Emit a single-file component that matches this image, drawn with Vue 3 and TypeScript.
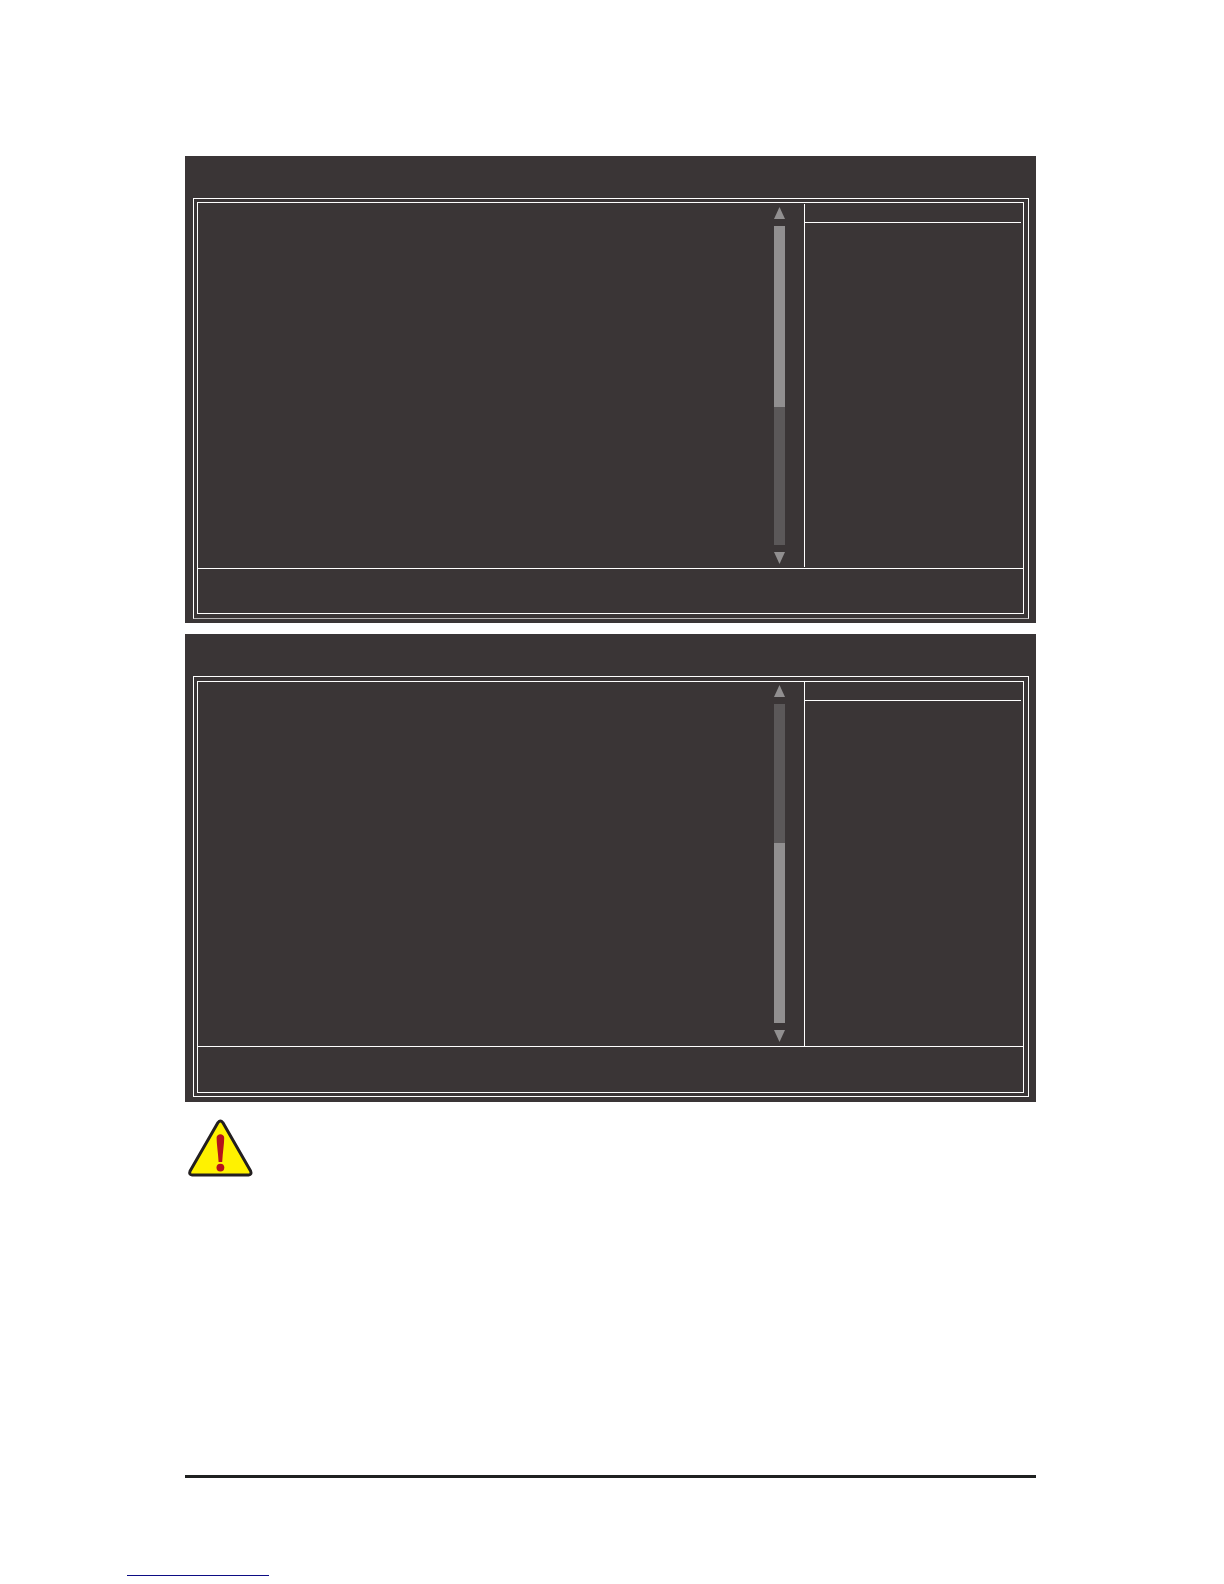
<script setup lang="ts">
interface Screen {
  id: string
  variant: 'upper' | 'lower'
  thumbStart: number
  thumbSize: number
}

// Thumb position and size are percentages of the scroll track.
const screens: Screen[] = [
  { id: 'first', variant: 'upper', thumbStart: 0, thumbSize: 56.74 },
  { id: 'second', variant: 'lower', thumbStart: 43.57, thumbSize: 56.43 },
]
</script>

<template>
  <div class="page">
    <main class="content">
      <section v-for="s in screens" :key="s.id" class="screen" :class="s.variant">
        <header class="title-bar"></header>
        <div class="frame">
          <div class="frame-inner">
            <div class="body">
              <div class="options"></div>
              <div class="scroll">
                <button class="arrow" type="button" aria-label="Scroll up">
                  <svg viewBox="0 0 11 12" width="11" height="12"><path d="M5.5 0L11 12H0Z" /></svg>
                </button>
                <div class="track">
                  <div class="thumb" :style="{ top: s.thumbStart + '%', height: s.thumbSize + '%' }"></div>
                </div>
                <button class="arrow" type="button" aria-label="Scroll down">
                  <svg viewBox="0 0 11 12" width="11" height="12"><path d="M0 0H11L5.5 12Z" /></svg>
                </button>
              </div>
              <aside class="help">
                <div class="help-title"></div>
              </aside>
            </div>
            <div class="keys"></div>
          </div>
        </div>
      </section>
      <div class="note">
        <svg class="warning" viewBox="0 0 66 58" width="66" height="58" role="img" aria-label="Warning">
          <path
            d="M31 3.6Q33.4 0.6 35.8 3.6L63.6 52Q65 55.8 61.6 56H5.1Q1.7 55.8 3.1 52Z"
            fill="#fff200"
            stroke="#231f20"
            stroke-width="3"
            stroke-linejoin="round"
          />
          <path d="M29.6 18.8C29.6 14 37.2 14 37.2 18.8C37.2 25 35.8 33 35.2 43H31.6C31 33 29.6 25 29.6 18.8Z" fill="#b5121b" />
          <circle cx="33.4" cy="48.6" r="3.9" fill="#b5121b" />
        </svg>
      </div>
    </main>
    <footer class="footer">
      <hr class="rule" />
      <a class="link" href="#" aria-label="Page link"></a>
    </footer>
  </div>
</template>

<style>
body {
  margin: 0;
  background: #fff;
}
</style>

<style scoped>
.page {
  box-sizing: border-box;
  min-height: 100vh;
  display: flex;
  flex-direction: column;
  padding: 156px 188px 8px 185px;
  font-family: "Liberation Sans", Arial, sans-serif;
}
.content {
  display: flex;
  flex-direction: column;
  gap: 11px;
}
.screen {
  background: #3a3536;
  padding: 0 7px 4px 8px;
}
.lower {
  padding-bottom: 5px;
}
.title-bar {
  height: 42px;
}
.frame {
  border: 1px solid #fff;
  padding: 3px 4px 4px 3px;
}
.upper .frame {
  border-bottom-color: #b5b3b3;
}
.lower .frame {
  padding: 4px 4px 3px 3px;
}
.frame-inner {
  border: 1px solid #fff;
}
.body {
  display: flex;
  border-bottom: 1px solid #fff;
}
.options {
  flex: 1;
}
.scroll {
  width: 11px;
  margin-right: 19px;
  padding: 4px 0;
  display: flex;
  flex-direction: column;
  gap: 7px;
}
.lower .scroll {
  padding-top: 3px;
}
.arrow {
  display: block;
  width: 11px;
  height: 12px;
  padding: 0;
  border: 0;
  background: none;
}
.arrow svg {
  display: block;
  fill: #918f90;
}
.track {
  position: relative;
  height: 319px;
  background: #5b5859;
}
.thumb {
  position: absolute;
  left: 0;
  width: 100%;
  background: #918f90;
}
.help {
  box-sizing: border-box;
  width: 219px;
  border-left: 1px solid #fff;
}
.upper .help {
  margin: 1px 0;
}
.help-title {
  height: 18px;
  margin-right: 2px;
  border-bottom: 1px solid #fff;
}
.keys {
  height: 44px;
}
.lower .keys {
  height: 45px;
}
.note {
  padding: 6px 2px;
}
.warning {
  display: block;
}
.footer {
  margin-top: auto;
}
.rule {
  height: 3px;
  margin: 0;
  border: 0;
  background: #1f2120;
}
.link {
  display: block;
  width: 142px;
  height: 97px;
  margin-left: -58px;
  border-bottom: 1px solid #0c0c84;
}
</style>
